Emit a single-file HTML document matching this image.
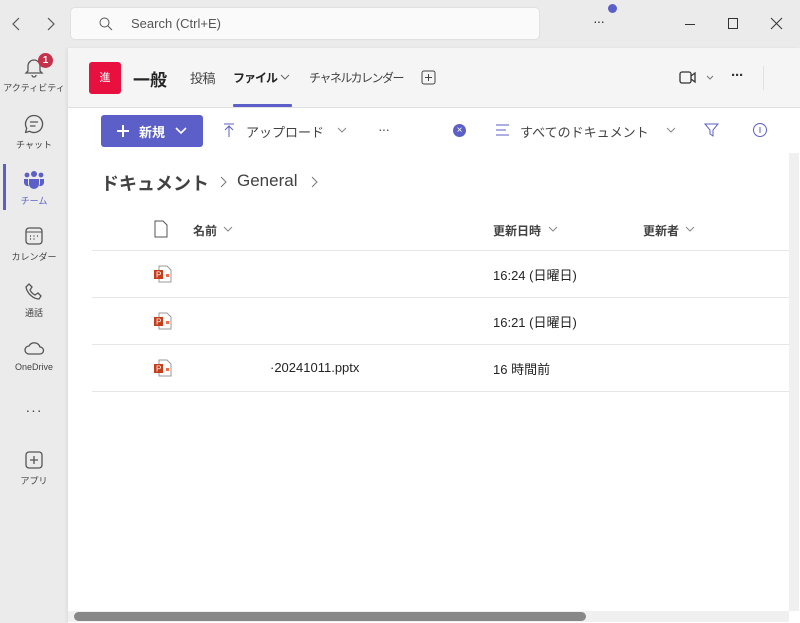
<!DOCTYPE html>
<html><head><meta charset="utf-8"><style>
*{box-sizing:border-box;margin:0;padding:0}
body{width:800px;height:623px;overflow:hidden;background:#ebebeb;font-family:"Liberation Sans","Noto Sans CJK JP",sans-serif;color:#242424;position:relative}
.a{position:absolute;white-space:nowrap}
.rail .it{position:absolute;left:0;width:68px;text-align:center;font-size:9px;color:#424242}
.rail svg{display:block;margin:0 auto 3px}
.hdr{font-size:14px;color:#424242}
.sep{position:absolute;left:92px;width:697px;height:1px;background:#e6e6e6}
.ppt{position:absolute;left:154px;width:18px;height:18px}
.col{font-size:12px;font-weight:bold;color:#424242}
</style></head><body>
<!-- title bar -->
<svg class="a" style="left:10px;top:16px" width="50" height="16"><path d="M9 2L3 8l6 6M38 2l6 6-6 6" stroke="#555" fill="none" stroke-width="1.2"/></svg>
<div class="a" style="left:70px;top:7px;width:470px;height:33px;background:#fafafa;border:1px solid #e0e0e0;border-radius:5px"></div>
<svg class="a" style="left:98px;top:16px" width="16" height="16"><circle cx="6.5" cy="6.5" r="4.5" stroke="#555" fill="none"/><path d="M10 10l4 4" stroke="#555"/></svg>
<div class="a" style="left:131px;top:16px;font-size:13px;color:#555">Search (Ctrl+E)</div>
<div class="a" style="left:593px;top:13px;font-size:14px;color:#333;letter-spacing:-1px">···</div>
<div class="a" style="left:608px;top:4px;width:9px;height:9px;border-radius:50%;background:#5b5fc7"></div>
<div class="a" style="left:685px;top:24px;width:10px;height:1px;background:#333"></div>
<div class="a" style="left:728px;top:18px;width:10px;height:11px;border:1px solid #333"></div>
<svg class="a" style="left:770px;top:17px" width="13" height="13"><path d="M1 1l11 11M12 1L1 12" stroke="#333"/></svg>
<!-- rail -->
<div class="rail">
<div class="it" style="top:56px"><svg width="22" height="22"><path d="M5 15V10a6 6 0 0112 0v5l2 2H3z M9 19a2 2 0 004 0" stroke="#555" fill="none" stroke-width="1.3"/></svg>アクティビティ</div>
<div class="a" style="left:38px;top:53px;width:15px;height:15px;border-radius:50%;background:#c4314b;color:#fff;font-size:10px;font-weight:bold;text-align:center;line-height:15px">1</div>
<div class="it" style="top:113px"><svg width="22" height="22"><path d="M11 2.5a8.5 8.5 0 11-4.3 15.8L2.5 19.5l1.2-4.2A8.5 8.5 0 0111 2.5z" stroke="#555" fill="none" stroke-width="1.3" stroke-linejoin="round"/><path d="M7.5 9h7M7.5 13h4.5" stroke="#555" stroke-width="1.3" stroke-linecap="round"/></svg>チャット</div>
<div class="a" style="left:3px;top:164px;width:3px;height:46px;background:#5b5fc7"></div>
<div class="it" style="top:169px;color:#5b5fc7"><svg width="22" height="22"><circle cx="11" cy="5" r="3" fill="#5b5fc7"/><circle cx="4" cy="6" r="2.4" fill="#5b5fc7"/><circle cx="18" cy="6" r="2.4" fill="#5b5fc7"/><path d="M6 10h10v5a5 5 0 01-10 0z" fill="#5b5fc7"/><path d="M1 10h4v5a4 4 0 001 2 4 4 0 01-5-3zM21 10h-4v5a4 4 0 01-1 2 4 4 0 005-3z" fill="#5b5fc7"/></svg>チーム</div>
<div class="it" style="top:225px"><svg width="22" height="22"><rect x="3" y="3" width="16" height="16" rx="3" stroke="#555" fill="none" stroke-width="1.3"/><path d="M3 7h16" stroke="#555"/><path d="M7 11h1M10.5 11h1M14 11h1M7 14h1M10.5 14h1" stroke="#555" stroke-width="1.5"/></svg>カレンダー</div>
<div class="it" style="top:281px"><svg width="22" height="22"><path d="M6 3l3 3-2 3c1 2 3 4 5 5l3-2 3 3-2 3C10 18 4 12 3 6z" stroke="#555" fill="none" stroke-width="1.3"/></svg>通話</div>
<div class="it" style="top:337px"><svg width="22" height="22"><path d="M6 17a4 4 0 010-8 6 6 0 0111 1 3.5 3.5 0 010 7z" stroke="#555" fill="none" stroke-width="1.3"/></svg>OneDrive</div>
<div class="it" style="top:402px;font-size:14px;letter-spacing:1px">···</div>
<div class="it" style="top:449px"><svg width="22" height="22"><rect x="3" y="3" width="16" height="16" rx="3" stroke="#555" fill="none" stroke-width="1.3"/><path d="M11 7v8M7 11h8" stroke="#555" stroke-width="1.3"/></svg>アプリ</div>
</div>
<!-- content -->
<div class="a" style="left:68px;top:48px;width:732px;height:575px;background:#fff;box-shadow:-2px 0 3px rgba(0,0,0,.05)"></div>
<div class="a" style="left:68px;top:48px;width:732px;height:60px;background:#f5f5f5;border-bottom:1px solid #e0e0e0"></div>
<div class="a" style="left:89px;top:62px;width:32px;height:32px;background:#e8103e;border-radius:3px;color:#fff;font-size:11px;text-align:center;line-height:32px">進</div>
<div class="a" style="left:133px;top:66px;font-size:17px;font-weight:bold">一般</div>
<div class="a hdr" style="left:190px;top:68px;font-size:13px;letter-spacing:-0.5px">投稿</div>
<div class="a" style="left:233px;top:69px;font-size:12px;font-weight:bold;letter-spacing:-1px;color:#242424">ファイル</div>
<svg class="a" style="left:280px;top:74px" width="10" height="6"><path d="M1 1l4 4 4-4" stroke="#666" fill="none"/></svg>
<div class="a" style="left:233px;top:104px;width:59px;height:3px;background:#5b5fc7;border-radius:1px"></div>
<div class="a hdr" style="left:309px;top:69px;font-size:12px;letter-spacing:-1.5px">チャネルカレンダー</div>
<svg class="a" style="left:421px;top:70px" width="16" height="16"><rect x="1" y="1" width="13" height="13" rx="2" stroke="#444" fill="none"/><path d="M7.5 4v7M4 7.5h7" stroke="#444"/></svg>
<svg class="a" style="left:679px;top:70px" width="40" height="16"><rect x="1" y="2" width="11" height="11" rx="2" stroke="#333" fill="none" stroke-width="1.3"/><path d="M12 6l4-3v9l-4-3" stroke="#333" fill="none" stroke-width="1.3"/><path d="M28 6l3 3 3-3" stroke="#777" fill="none"/></svg>
<div class="a" style="left:731px;top:67px;font-size:15px;font-weight:bold;letter-spacing:-1px;color:#333">···</div>
<div class="a" style="left:763px;top:66px;width:1px;height:24px;background:#e0e0e0"></div>
<!-- toolbar -->
<div class="a" style="left:101px;top:115px;width:102px;height:32px;background:#5b5fc7;border-radius:3px"></div>
<svg class="a" style="left:116px;top:124px" width="14" height="14"><path d="M7 1v12M1 7h12" stroke="#fff" stroke-width="2"/></svg>
<div class="a" style="left:139px;top:122px;font-size:13px;font-weight:bold;color:#fff">新規</div>
<svg class="a" style="left:175px;top:127px" width="12" height="8"><path d="M1 1l5 5 5-5" stroke="#fff" fill="none" stroke-width="1.6"/></svg>
<svg class="a" style="left:222px;top:122px" width="14" height="16"><path d="M2 2h10M7 4v11M3 8l4-4 4 4" stroke="#5b5fc7" fill="none"/></svg>
<div class="a" style="left:246px;top:122px;font-size:13px;color:#424242">アップロード</div>
<svg class="a" style="left:337px;top:127px" width="10" height="6"><path d="M1 1l4 4 4-4" stroke="#888" fill="none"/></svg>
<div class="a" style="left:378px;top:121px;font-size:14px;color:#555;letter-spacing:-1px">···</div>
<div class="a" style="left:453px;top:124px;width:13px;height:13px;border-radius:50%;background:#5b5fc7;color:#fff;font-size:10px;text-align:center;line-height:13px">×</div>
<svg class="a" style="left:495px;top:124px" width="16" height="14"><path d="M1 1h13M1 6h10M1 11h13" stroke="#5b5fc7"/></svg>
<div class="a" style="left:520px;top:122px;font-size:13px;color:#424242">すべてのドキュメント</div>
<svg class="a" style="left:666px;top:127px" width="10" height="6"><path d="M1 1l4 4 4-4" stroke="#888" fill="none"/></svg>
<svg class="a" style="left:704px;top:122px" width="16" height="16"><path d="M1 2h13l-5 6v6l-3-2V8z" stroke="#5b5fc7" fill="none"/></svg>
<svg class="a" style="left:752px;top:122px" width="16" height="16"><circle cx="8" cy="8" r="6.5" stroke="#5b5fc7" fill="none"/><path d="M8 5v6" stroke="#5b5fc7"/></svg>
<!-- breadcrumb -->
<div class="a" style="left:101px;top:170px;font-size:18px;font-weight:bold;color:#424242">ドキュメント</div>
<svg class="a" style="left:219px;top:176px" width="8" height="12"><path d="M2 1l5 5-5 5" stroke="#777" fill="none"/></svg>
<div class="a" style="left:237px;top:171px;font-size:17px;color:#424242">General</div>
<svg class="a" style="left:310px;top:176px" width="8" height="12"><path d="M2 1l5 5-5 5" stroke="#777" fill="none"/></svg>
<!-- table -->
<svg class="a" style="left:154px;top:220px" width="14" height="18"><path d="M1 1h8l4 4v12H1z" stroke="#555" fill="none"/></svg>
<div class="a col" style="left:193px;top:222px">名前</div>
<div class="a col" style="left:493px;top:222px">更新日時</div>
<div class="a col" style="left:643px;top:222px">更新者</div>
<svg class="a" style="left:223px;top:226px" width="10" height="6"><path d="M1 1l4 4 4-4" stroke="#888" fill="none"/></svg>
<svg class="a" style="left:548px;top:226px" width="10" height="6"><path d="M1 1l4 4 4-4" stroke="#888" fill="none"/></svg>
<svg class="a" style="left:685px;top:226px" width="10" height="6"><path d="M1 1l4 4 4-4" stroke="#888" fill="none"/></svg>
<div class="sep" style="top:250px"></div>
<div class="sep" style="top:297px"></div>
<div class="sep" style="top:344px"></div>
<div class="sep" style="top:391px"></div>
<svg class="ppt" style="top:265px" viewBox="0 0 18 18"><path d="M5 1h8l4 4v12H5z" fill="#fff" stroke="#999"/><rect x="0" y="5" width="9" height="9" fill="#c43e1c"/><text x="2" y="12.5" font-size="8" fill="#fff" font-family="Liberation Sans">P</text><rect x="12" y="9" width="3" height="3" fill="#ed6c47"/></svg>
<svg class="ppt" style="top:312px" viewBox="0 0 18 18"><path d="M5 1h8l4 4v12H5z" fill="#fff" stroke="#999"/><rect x="0" y="5" width="9" height="9" fill="#c43e1c"/><text x="2" y="12.5" font-size="8" fill="#fff" font-family="Liberation Sans">P</text><rect x="12" y="9" width="3" height="3" fill="#ed6c47"/></svg>
<svg class="ppt" style="top:359px" viewBox="0 0 18 18"><path d="M5 1h8l4 4v12H5z" fill="#fff" stroke="#999"/><rect x="0" y="5" width="9" height="9" fill="#c43e1c"/><text x="2" y="12.5" font-size="8" fill="#fff" font-family="Liberation Sans">P</text><rect x="12" y="9" width="3" height="3" fill="#ed6c47"/></svg>
<div class="a" style="left:493px;top:265px;font-size:13px">16:24 (日曜日)</div>
<div class="a" style="left:493px;top:312px;font-size:13px">16:21 (日曜日)</div>
<div class="a" style="left:270px;top:360px;font-size:13px">·20241011.pptx</div>
<div class="a" style="left:493px;top:359px;font-size:13px">16 時間前</div>
<!-- scrollbars -->
<div class="a" style="left:789px;top:153px;width:10px;height:458px;background:#f0f0f0"></div>
<div class="a" style="left:68px;top:611px;width:721px;height:11px;background:#f0f0f0"></div>
<div class="a" style="left:74px;top:612px;width:512px;height:9px;background:#888;border-radius:5px"></div>
</body></html>
